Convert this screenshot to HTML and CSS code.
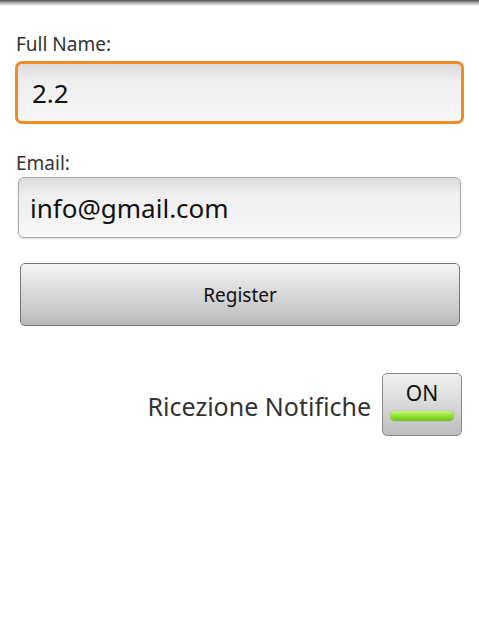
FILE: index.html
```html
<!DOCTYPE html>
<html lang="it">

<head>
    <meta charset="UTF-8">
    <meta name="viewport" content="width=device-width, initial-scale=1.0">
    <title>Register</title>
    <link rel="stylesheet" href="styles.css">
</head>

<body>
    <div class="top-shadow"></div>

    <div class="form">
        <label class="field-label">Full Name:</label>
        <div class="text-field focused">2.2</div>

        <label class="field-label email-label">Email:</label>
        <div class="text-field">info@gmail.com</div>

        <button class="register-button">Register</button>

        <div class="toggle-row">
            <span class="toggle-label">Ricezione Notifiche</span>
            <div class="toggle-button">
                <span>ON</span>
                <div class="toggle-light"></div>
            </div>
        </div>
    </div>
</body>

</html>
```

FILE: styles.css
```css
body {
    margin: 0;
    width: 479px;
    height: 643px;
    background-color: #fff;
    font-family: 'Noto Sans', 'Open Sans', sans-serif;
    overflow: hidden;
}

.top-shadow {
    height: 6px;
    background: linear-gradient(#4a4a4a, #9a9a9a 35%, #fff);
}

.form {
    display: flex;
    flex-direction: column;
    padding: 26px 15px 0 15px;
}

.field-label {
    font-size: 19px;
    color: #333;
    line-height: 24px;
    margin-left: 1px;
    margin-bottom: 5px;
}

.email-label {
    margin-top: 27px;
    margin-bottom: 2px;
}

.text-field {
    height: 61px;
    box-sizing: border-box;
    margin: 0 3px;
    padding-left: 11px;
    display: flex;
    align-items: center;
    font-size: 26px;
    color: #111;
    border: 1px solid #a8a8a8;
    border-radius: 6px;
    background: linear-gradient(#dcdcdc, #efefef 30%, #f7f7f7);
    box-shadow: 0 1px 2px rgba(0, 0, 0, 0.15);
}

.text-field.focused {
    height: 63px;
    margin: 0;
    padding-left: 14px;
    border: 3px solid #f08a24;
    border-radius: 7px;
    box-shadow: none;
}

.register-button {
    margin: 25px 4px 0 5px;
    height: 63px;
    font-family: inherit;
    font-size: 19px;
    color: #111;
    border: 1px solid #777;
    border-radius: 5px;
    background: linear-gradient(#f4f4f4, #dadada 45%, #c4c4c4 85%, #b8b8b8);
}

.toggle-row {
    display: flex;
    justify-content: flex-end;
    align-items: center;
    gap: 11px;
    margin-top: 47px;
    margin-right: 2px;
}

.toggle-label {
    font-size: 25px;
    color: #333;
    margin-top: 2px;
}

.toggle-button {
    width: 80px;
    height: 63px;
    box-sizing: border-box;
    border: 1px solid #888;
    border-radius: 5px;
    background: linear-gradient(#f0f0f0, #d8d8d8 50%, #bdbdbd);
    display: flex;
    flex-direction: column;
    align-items: center;
    padding-top: 5px;
}

.toggle-button span {
    font-size: 21px;
    line-height: 28px;
    color: #111;
}

.toggle-light {
    width: 64px;
    height: 10px;
    margin-top: 4px;
    border-radius: 5px;
    background: linear-gradient(#c8f77a, #8be02c 55%, #6cc21a);
    box-shadow: 0 0 1px #5a9a10;
}
```
